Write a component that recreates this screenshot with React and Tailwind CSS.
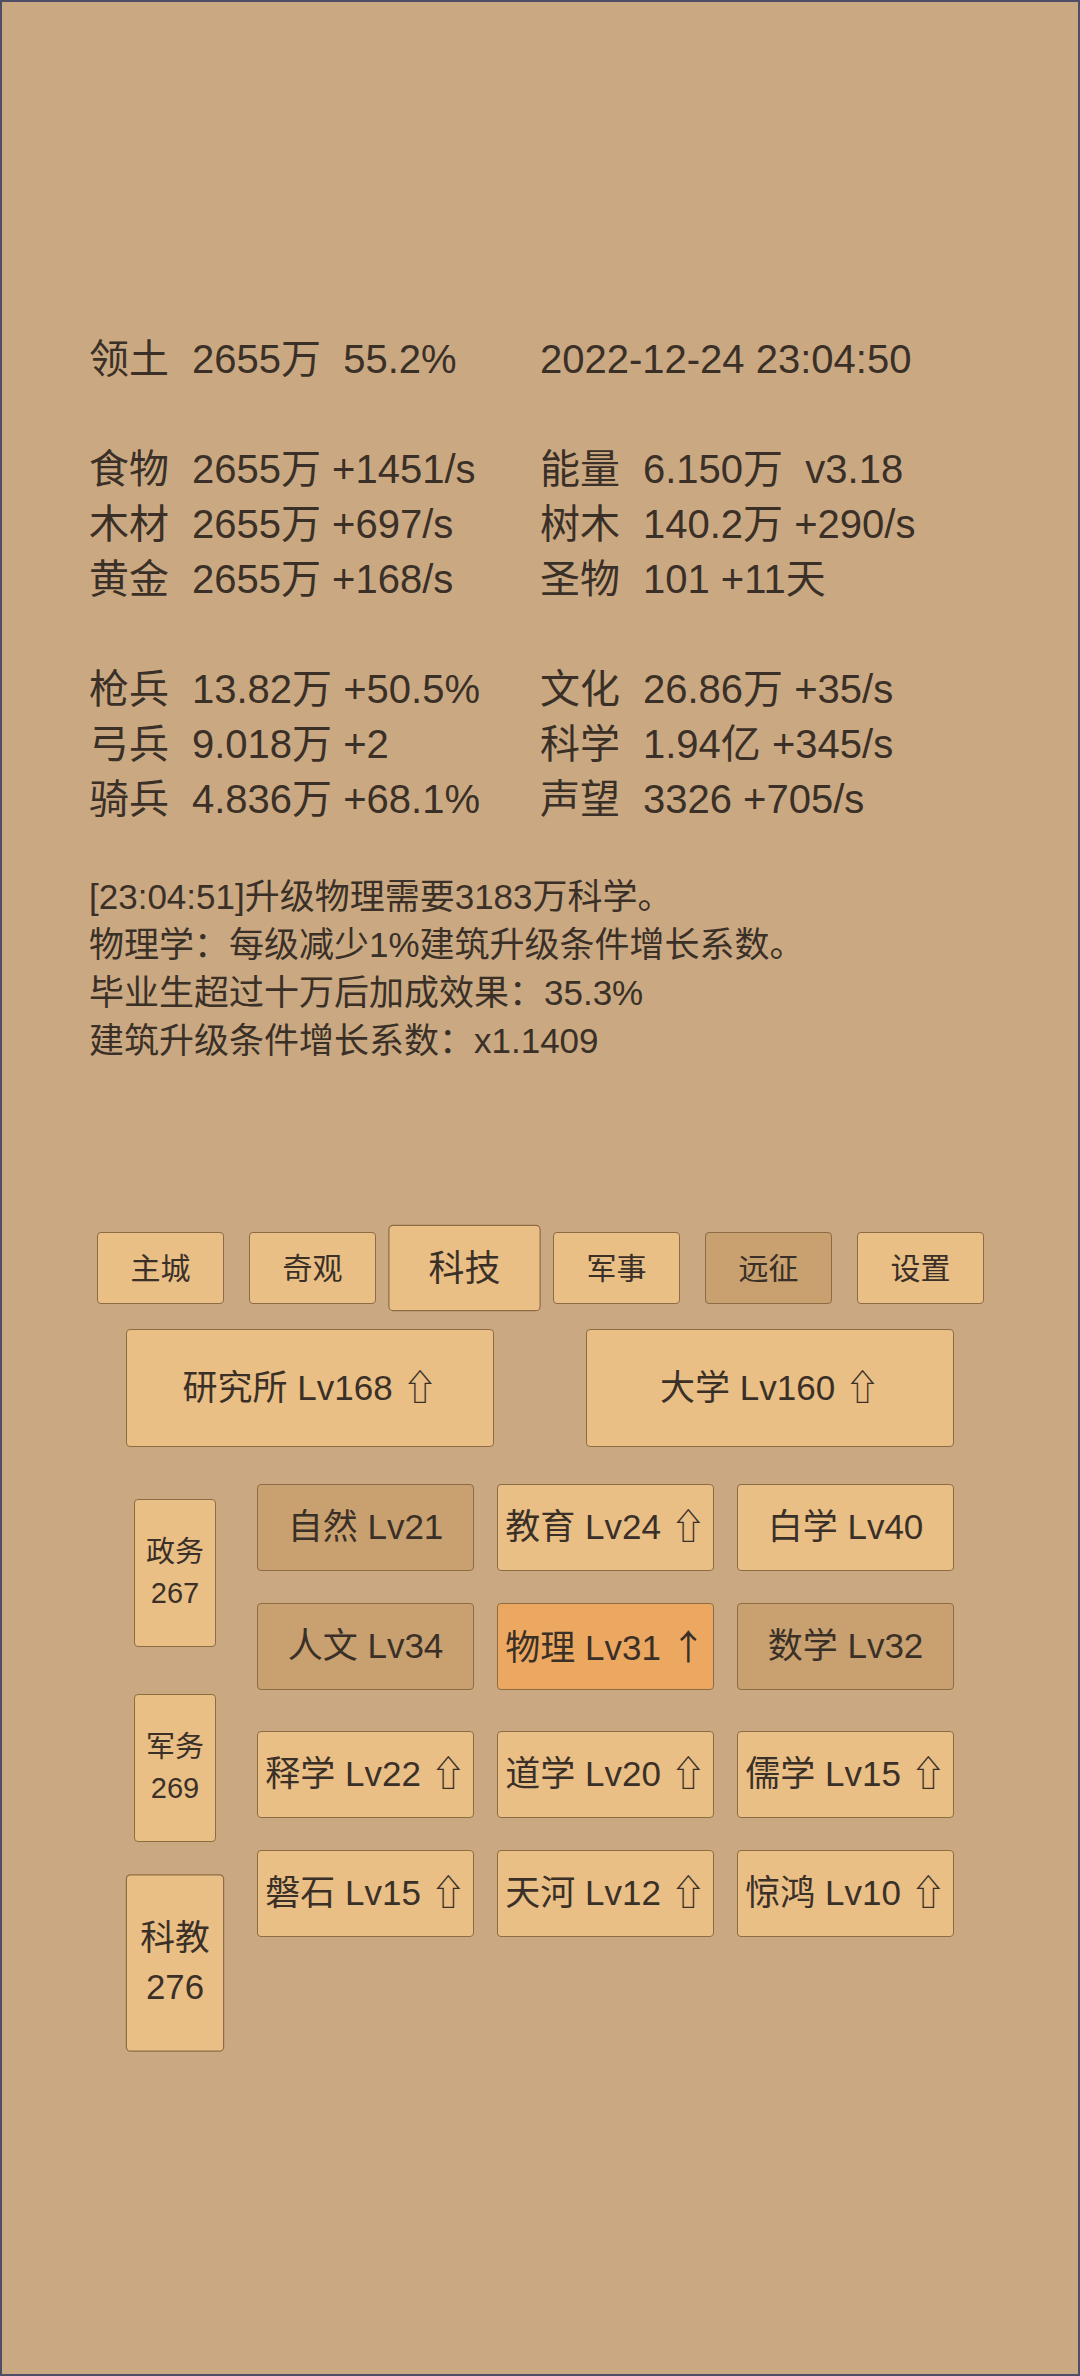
import React from "react";

const statsLeft = [
  ["领土", "2655万  55.2%"],
  null,
  ["食物", "2655万 +1451/s"],
  ["木材", "2655万 +697/s"],
  ["黄金", "2655万 +168/s"],
  null,
  ["枪兵", "13.82万 +50.5%"],
  ["弓兵", "9.018万 +2"],
  ["骑兵", "4.836万 +68.1%"],
];
const statsRight = [
  ["", "2022-12-24 23:04:50", true],
  null,
  ["能量", "6.150万  v3.18"],
  ["树木", "140.2万 +290/s"],
  ["圣物", "101 +11天"],
  null,
  ["文化", "26.86万 +35/s"],
  ["科学", "1.94亿 +345/s"],
  ["声望", "3326 +705/s"],
];

function StatLine({ item }) {
  if (!item) return <div className="h-[55px]" />;
  if (item[2]) return <div className="h-[55px] whitespace-pre">{item[1]}</div>;
  return (
    <div className="h-[55px] flex whitespace-pre">
      <span className="w-[103px] shrink-0">{item[0]}</span>
      <span>{item[1]}</span>
    </div>
  );
}

const LIGHT = "bg-[#e9bf86]";
const DARK = "bg-[#c9a06f]";
const ORANGE = "bg-[#eca861]";

function Tab({ label, tone = LIGHT, selected = false }) {
  return (
    <div
      className={
        "w-[127px] h-[72px] mx-[12.5px] shrink-0 flex items-center justify-center rounded-[4px] border border-[#8d6c44] text-[30px] " +
        tone +
        (selected ? " scale-[1.2]" : "")
      }
    >
      {label}
    </div>
  );
}

function Label({ text, arrow }) {
  return (
    <span className="whitespace-pre">
      {text}
      {arrow === "up" && " ⇧"}
      {arrow === "thin" && (
        <>
          {" "}
          <span className="font-['Noto_Sans_CJK_SC',sans-serif]">↑</span>
        </>
      )}
    </span>
  );
}

function GridBtn({ text, arrow, tone = LIGHT }) {
  return (
    <div
      className={
        "w-[217px] h-[87px] shrink-0 flex items-center justify-center rounded-[4px] border border-[#8d6c44] text-[35px] " +
        tone
      }
    >
      <Label text={text} arrow={arrow} />
    </div>
  );
}

function SideBtn({ top, bottom, selected = false }) {
  return (
    <div
      className={
        "w-[82px] h-[148px] shrink-0 flex flex-col items-center justify-center rounded-[4px] border border-[#8d6c44] text-[29px] leading-[41px] bg-[#e9bf86]" +
        (selected ? " scale-[1.2]" : "")
      }
    >
      <span>{top}</span>
      <span>{bottom}</span>
    </div>
  );
}

export default function App() {
  return (
    <div className="w-[1080px] h-[2376px] bg-[#caa982] border-2 border-[#4f4e68] overflow-hidden text-[#3a3027] font-['Liberation_Sans','Noto_Sans_CJK_SC',sans-serif]">
      <div className="pt-[330px] pl-[87px]">
        <div className="grid grid-cols-[451px_1fr] text-[40px] leading-[55px]">
          <div className="flex flex-col">
            {statsLeft.map((it, i) => (
              <StatLine key={i} item={it} />
            ))}
          </div>
          <div className="flex flex-col">
            {statsRight.map((it, i) => (
              <StatLine key={i} item={it} />
            ))}
          </div>
        </div>
        <div className="mt-[46px] text-[35px] leading-[48px]">
          <div>[23:04:51]升级物理需要3183万科学。</div>
          <div>物理学：每级减少1%建筑升级条件增长系数。</div>
          <div>毕业生超过十万后加成效果：35.3%</div>
          <div>建筑升级条件增长系数：x1.1409</div>
        </div>
      </div>

      <div className="mt-[167px] flex pl-[82.5px]">
        <Tab label="主城" />
        <Tab label="奇观" />
        <Tab label="科技" selected />
        <Tab label="军事" />
        <Tab label="远征" tone={DARK} />
        <Tab label="设置" />
      </div>

      <div className="mt-[25px] flex pl-[124px] gap-[92px]">
        <div className="w-[368px] h-[118px] flex items-center justify-center rounded-[4px] border border-[#8d6c44] bg-[#e9bf86] text-[35px]">
          <Label text="研究所 Lv168" arrow="up" />
        </div>
        <div className="w-[368px] h-[118px] flex items-center justify-center rounded-[4px] border border-[#8d6c44] bg-[#e9bf86] text-[35px]">
          <Label text="大学 Lv160" arrow="up" />
        </div>
      </div>

      <div className="mt-[37px] flex items-start pl-[132px]">
        <div className="mt-[15px] flex flex-col gap-[47px]">
          <SideBtn top="政务" bottom="267" />
          <SideBtn top="军务" bottom="269" />
          <SideBtn top="科教" bottom="276" selected />
        </div>
        <div className="ml-[41px] flex flex-col">
          <div className="flex gap-[23px]">
            <GridBtn text="自然 Lv21" tone={DARK} />
            <GridBtn text="教育 Lv24" arrow="up" />
            <GridBtn text="白学 Lv40" />
          </div>
          <div className="mt-[32px] flex gap-[23px]">
            <GridBtn text="人文 Lv34" tone={DARK} />
            <GridBtn text="物理 Lv31" arrow="thin" tone={ORANGE} />
            <GridBtn text="数学 Lv32" tone={DARK} />
          </div>
          <div className="mt-[41px] flex gap-[23px]">
            <GridBtn text="释学 Lv22" arrow="up" />
            <GridBtn text="道学 Lv20" arrow="up" />
            <GridBtn text="儒学 Lv15" arrow="up" />
          </div>
          <div className="mt-[32px] flex gap-[23px]">
            <GridBtn text="磐石 Lv15" arrow="up" />
            <GridBtn text="天河 Lv12" arrow="up" />
            <GridBtn text="惊鸿 Lv10" arrow="up" />
          </div>
        </div>
      </div>
    </div>
  );
}
